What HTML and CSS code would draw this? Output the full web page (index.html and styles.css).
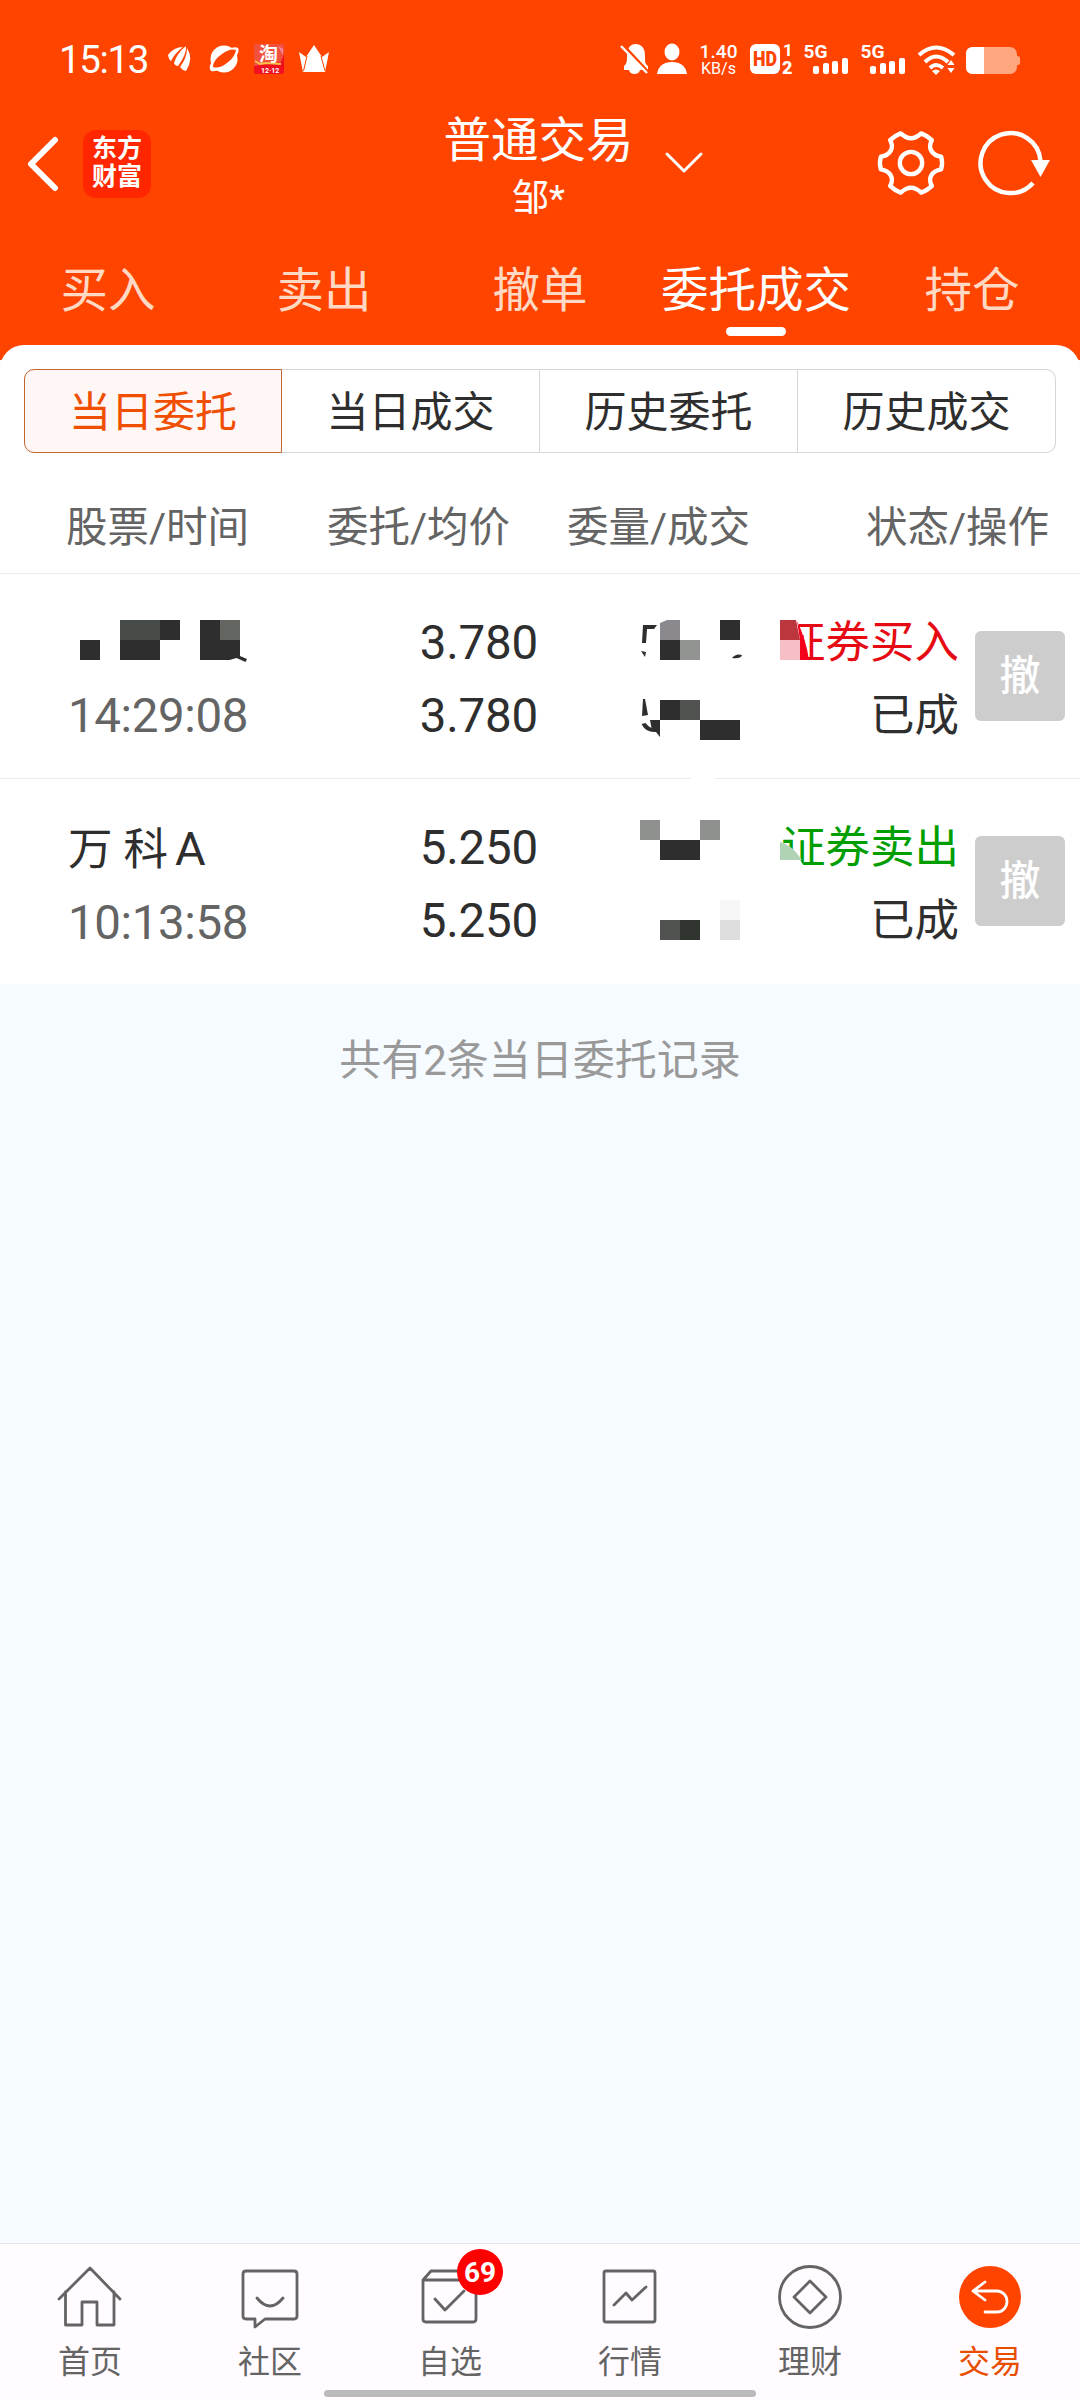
FILE: index.html
```
<!DOCTYPE html>
<html lang="zh-CN">
<head>
    <meta charset="UTF-8">
    <meta name="viewport" content="width=device-width, initial-scale=1.0">
    <title>普通交易</title>
    <link rel="stylesheet" href="styles.css">
</head>
<body>
    <header class="top">
        <!-- Status bar -->
        <div class="status-bar">
            <span class="clock">15:13</span>
            <svg class="status-left" width="166" height="44" viewBox="166 36 166 44" fill="#fff">
                <path d="M168 55Q174 47 183 47Q175 53 171 61Q169 60 168 55Z"/>
                <path d="M174 63Q177 53 186 46Q187 54 178 66Q175 66 174 63Z"/>
                <path d="M180 67Q187 58 187 48Q194 59 186 71Q182 70 180 67Z"/>
                <circle cx="224" cy="59" r="13.500"/>
                <path d="M211 71Q206 65 220 54Q233 45 238 48Q241 54 228 64Q216 73 211 71Z"/>
                <path d="M213 67Q213 60 222 54Q230 48 236 50Q235 57 227 63Q219 69 213 67Z" fill="#ff4400"/>
                <rect x="254" y="44" width="30" height="30" rx="2" fill="#f01020"/>
                <path d="M254 44h30v10l-3 8-27 4z" fill="#f0503c"/>
                <path d="M255 61l5 3 6-1 15 1" stroke="#ffc04a" stroke-width="2" fill="none"/>
                <path d="M278 46l5 3v6z" fill="#f887a8"/>
                <text x="259" y="61" font-size="19" font-weight="700">淘</text>
                <text x="261" y="73" font-size="7" font-weight="700">12·12</text>
                <path d="M303 72L299 52L306 57L314 45L322 57L329 52L325 72Z"/>
                <path d="M307 56L303.500 71M321 56L325 71" stroke="#ff4400" stroke-width="1" fill="none"/>
            </svg>
            <svg class="status-right" width="402" height="44" viewBox="620 36 402 44" fill="#fff">
                <path d="M624 66q3-2 3-8v-3q1-11 8-11 10 0 10 12v4q0 4 3 6v4h-24zM629 70h11q-1 4-5.500 4t-5.500-4z"/>
                <path d="M624 46L649 73" stroke="#ff4400" stroke-width="3"/>
                <path d="M621 46L647 73" stroke="#fff" stroke-width="2.400"/>
                <ellipse cx="672" cy="52" rx="7.500" ry="8.500"/>
                <path d="M657 74q2-12 15-12t15 12z"/>
                <text x="699.500" y="58" font-size="19" font-weight="500" textLength="38">1.40</text>
                <text x="701" y="74" font-size="16.500" textLength="35" lengthAdjust="spacingAndGlyphs">KB/s</text>
                <rect x="750" y="44" width="30" height="30" rx="6"/>
                <text x="753" y="66" font-size="20" font-weight="900" fill="#ff4400" textLength="24" lengthAdjust="spacingAndGlyphs">HD</text>
                <text x="783" y="56" font-size="17" font-weight="700">1</text>
                <text x="782" y="74" font-size="18" font-weight="900">2</text>
                <g id="signal">
                    <text x="803.500" y="58" font-size="19" font-weight="700" textLength="24" lengthAdjust="spacingAndGlyphs">5G</text>
                    <rect x="813" y="66" width="6" height="8" rx="2"/>
                    <rect x="823" y="63" width="6" height="11" rx="2"/>
                    <rect x="832" y="61" width="6" height="13" rx="2"/>
                    <rect x="842" y="58" width="6" height="16" rx="2"/>
                </g>
                <use href="#signal" x="57"/>
                <g fill="none" stroke="#fff" stroke-width="4">
                    <path d="M919 55q17-15 35 0"/>
                    <path d="M925 62q11-11 23 0"/>
                    <path d="M930 68q6-6 13 0"/>
                </g>
                <path d="M932 71q4-3 8 0l-4 4zM951 60l3.500 5h-7zM951 73l-3.500-5h7z"/>
                <rect x="966" y="47" width="51" height="27" rx="7" fill="#ffa880"/>
                <path d="M1017 56q3 0 3 2v5q0 2-3 2z" fill="#ffa880"/>
                <path d="M984 47h-11q-7 0-7 7v13q0 7 7 7h11z"/>
            </svg>
        </div>

        <!-- Title -->
        <div class="title-bar">
            <div class="title-left">
                <svg width="34" height="60" viewBox="0 0 34 60" fill="none" stroke="#fff" stroke-width="6" stroke-linecap="round" stroke-linejoin="round">
                    <path d="M30 6L6 30L30 54"/>
                </svg>
                <div class="logo">东方<br>财富</div>
            </div>
            <div class="title">
                <h1>普通交易</h1>
                <p>邹*</p>
                <svg class="title-arrow" width="40" height="24" viewBox="0 0 40 24" fill="none" stroke="#fff" stroke-width="3" stroke-linecap="round" stroke-linejoin="round">
                    <path d="M3 3L20 20L37 3"/>
                </svg>
            </div>
            <div class="title-right">
                <svg width="70" height="70" viewBox="-36 -36 72 72" fill="none" stroke="#fff" stroke-width="4.500" stroke-linejoin="round">
                    <path d="M31 -6.500Q33 0 31 6.500C21 8 17 16 21.500 23.500Q17 28 10.500 30.500Q0 20.500 -10.500 30.500Q-17 28 -21.500 23.500C-17 16 -21 8 -31 6.500Q-33 0 -31 -6.500C-21 -8 -17 -16 -21.500 -23.500Q-17 -28 -10.500 -30.500Q0 -20.500 10.500 -30.500Q17 -28 21.500 -23.500C17 -16 21 -8 31 -6.500Z"/>
                    <circle r="11.500"/>
                </svg>
                <svg width="74" height="70" viewBox="-33 -35 74 70">
                    <path d="M22 20A30 30 0 1 1 29.500 -2" fill="none" stroke="#fff" stroke-width="4.500"/>
                    <path d="M20 -3h19l-9.500 17z" fill="#fff"/>
                </svg>
            </div>
        </div>

        <nav class="tabs">
            <a>买入</a>
            <a>卖出</a>
            <a>撤单</a>
            <a class="active">委托成交</a>
            <a>持仓</a>
        </nav>
    </header>

    <main class="panel">
        <div class="segments">
            <button class="segment active">当日委托</button>
            <button class="segment">当日成交</button>
            <button class="segment">历史委托</button>
            <button class="segment">历史成交</button>
        </div>

        <div class="columns">
            <span>股票/时间</span>
            <span>委托/均价</span>
            <span>委量/成交</span>
            <span>状态/操作</span>
        </div>

        <div class="order">
            <div class="name"><p>&nbsp;</p><p class="time">14:29:08</p></div>
            <div class="price"><p>3.780</p><p>3.780</p></div>
            <div class="state"><p class="buy">证券买入</p><p>已成</p></div>
            <button class="cancel">撤</button>
            <!-- Hidden name and quantity -->
            <svg class="mosaic" width="1080" height="206" viewBox="0 574 1080 206">
                <g fill="#2e2e2e">
                    <path d="M80 640h20v20h-20zM160 620h20v20h-20zM120 640h40v20h-40zM200 620h20v20h20v16l7 3-1.500 3-9-4-7 2h-29.500z"/>
                    <path d="M643 625h14l-3 4h-7l-1 14h-4zM641 651l5 1-1 5zM660 640h20v20h-20zM720 620h20v20h-20zM732 658q4-5 10-3-1 4-10 3z"/>
                    <path d="M643 699h2l3 16-6 1z"/>
                    <path d="M650 720h10v17l-4-5q-10 1-14.500-8l4-1q3 4 6 5z"/>
                    <path d="M660 700h20v20h-20zM700 720h40v20h-40z"/>
                </g>
                <path d="M120 620h40v20h-40z" fill="#484c48"/>
                <path d="M220 620h20v20h-20z" fill="#646662"/>
                <path d="M660 623l7-3h13v20h-20z" fill="#8c898e"/>
                <path d="M680 640h20v20h-20z" fill="#929491"/>
                <path d="M680 700h20v20h-20z" fill="#50534f"/>
                <path d="M774 614h24l4 48h-28z" fill="#fff"/>
                <path d="M780 620h16l4 20h-20z" fill="#bb373d"/>
                <path d="M780 640h20v20h-20z" fill="#f7bec5"/>
                <path d="M797 621q9 18 12 39h-9v-20z" fill="#f4001a"/>
                <path d="M691 777h24v3h-24z" fill="#fff"/>
            </svg>
        </div>

        <div class="order">
            <div class="name"><p>万 科<span class="suffix">A</span></p><p class="time">10:13:58</p></div>
            <div class="price"><p>5.250</p><p>5.250</p></div>
            <div class="state"><p class="sell">证券卖出</p><p>已成</p></div>
            <button class="cancel">撤</button>
            <svg class="mosaic" width="1080" height="206" viewBox="0 779 1080 206">
                <path d="M640 820h20v20h-20zM700 820h20v20h-20z" fill="#8f918e"/>
                <path d="M660 840h40v20h-40z" fill="#2e2e2e"/>
                <path d="M660 920h20v20h-20z" fill="#50534f"/>
                <path d="M680 920h20v20h-20z" fill="#2f342f"/>
                <path d="M720 900h20v20h-20z" fill="#f7f7f7"/>
                <path d="M720 920h20v20h-20z" fill="#dedede"/>
                <path d="M780 860v6h24l-4-6z" fill="#fff"/>
                <path d="M780 842q11 2 22 18h-22z" fill="#afd3b4"/>
            </svg>
        </div>
    </main>

    <p class="summary">共有2条当日委托记录</p>

    <!-- Bottom navigation -->
    <nav class="bottom-nav">
        <a>
            <svg width="70" height="70" viewBox="-35 -35 70 70">
                <path d="M-31 2L0 -29L30 2M-24.500 -5V28H-8V5H7V28H24V-5"/>
            </svg>
            首页
        </a>
        <a>
            <svg width="70" height="70" viewBox="-35 -35 70 70">
                <path d="M-24 -26H24Q27 -26 27 -23V19Q27 22 24 22H-5L-15 30V22H-24Q-27 22 -27 19V-23Q-27 -26 -24 -26ZM-13 1Q0 17 13 1"/>
            </svg>
            社区
        </a>
        <a>
            <svg width="70" height="70" viewBox="-35 -35 70 70">
                <path d="M-27 -17L-19 -26H19L26 -17V22Q26 25 23 25H-24Q-27 25 -27 22ZM-27 -17H26M-15 2L-5 13L14 -6"/>
            </svg>
            <span class="badge">69</span>
            自选
        </a>
        <a>
            <svg width="70" height="70" viewBox="-35 -35 70 70">
                <rect x="-26" y="-26" width="51" height="51" rx="2"/>
                <path d="M-16 8L-4 -4L2 3L16 -10"/>
            </svg>
            行情
        </a>
        <a>
            <svg width="70" height="70" viewBox="-35 -35 70 70">
                <circle r="30.500"/>
                <path d="M0 -16L16 0L0 16L-16 0Z"/>
            </svg>
            理财
        </a>
        <a class="active">
            <svg width="70" height="70" viewBox="-35 -35 70 70">
                <circle r="31" fill="#ff4400" stroke="none"/>
                <path d="M-5 -15L-17 -6L-5 3M-17 -6H7A10 10.500 0 0 1 7 15H-5" stroke="#fff"/>
            </svg>
            交易
        </a>
        <div class="home-bar"></div>
    </nav>
</body>
</html>
```
FILE: styles.css
```
* {
    box-sizing: border-box;
}
body {
    margin: 0;
    width: 1080px;
    height: 2400px;
    display: flex;
    flex-direction: column;
    background-color: #f6fbff;
    color: #2e2e2e;
    font-family: Roboto, "Noto Sans CJK SC", sans-serif;
    overflow: hidden;
}
p, h1 {
    margin: 0;
    font-weight: 400;
}
button {
    font-family: inherit;
    color: inherit;
    padding: 0;
}
.top {
    height: 360px;
    background-color: #ff4400;
    color: #fff;
}
.status-bar {
    height: 98px;
    padding: 36px 58px 0 59px;
    display: flex;
}
.clock {
    width: 107px;
    font-size: 38.5px;
    line-height: 47px;
    letter-spacing: -1.4px;
}
.status-right {
    margin-left: auto;
}
.title-bar {
    height: 146px;
    padding: 0 28px 0 25px;
    display: grid;
    grid-template-columns: 1fr 300px 1fr;
}
.title-left {
    display: flex;
    align-items: center;
    gap: 24px;
    height: 132px;
}
.logo {
    width: 68px;
    height: 68px;
    padding-top: 5px;
    border-radius: 13px;
    background-color: #ff2600;
    font-size: 25px;
    font-weight: 700;
    line-height: 28px;
    text-align: center;
}
.title {
    position: relative;
    text-align: center;
}
.title h1 {
    padding-top: 13px;
    font-size: 47.5px;
    line-height: 60px;
}
.title p {
    font-size: 37px;
    line-height: 56px;
}
.title-arrow {
    position: absolute;
    left: 275px;
    top: 53px;
}
.title-right {
    display: flex;
    justify-content: flex-end;
    align-items: center;
    gap: 32px;
    height: 130px;
}
.tabs {
    height: 101px;
    display: grid;
    grid-template-columns: repeat(5, 1fr);
}
.tabs a {
    display: flex;
    flex-direction: column;
    align-items: center;
    color: #ffd9c4;
    font-size: 47.5px;
    line-height: 94px;
}
.tabs .active {
    color: #fff;
}
.tabs .active::after {
    content: "";
    width: 60px;
    height: 9px;
    margin-top: -11px;
    border-radius: 5px;
    background-color: #fff;
}
.panel {
    margin-top: -15px;
    padding-top: 24px;
    border-radius: 24px 24px 0 0;
    background-color: #fff;
}
.segments {
    display: grid;
    grid-template-columns: repeat(4, 1fr);
    margin: 0 24px;
}
.segment {
    height: 84px;
    padding-top: 2px;
    border: 1px solid #d5d5da;
    border-left-width: 0;
    background-color: #fff;
    font-size: 42px;
    line-height: 82px;
}
.segment:last-child {
    border-radius: 0 10px 10px 0;
}
.segment.active {
    border: 1px solid #c0662e;
    border-radius: 10px 0 0 10px;
    background-color: #fff6f6;
    color: #f04e00;
}
.columns {
    display: grid;
    grid-template-columns: 261px 240px 1fr 182px;
    height: 121px;
    padding: 24px 32px 0 66px;
    border-bottom: 1px solid #ececec;
    color: #646464;
    font-size: 41.5px;
    line-height: 101px;
    white-space: nowrap;
}
.order {
    position: relative;
    display: grid;
    grid-template-columns: 251px 219px 1fr 90px;
    height: 205px;
    padding: 33px 15px 0 68px;
    border-bottom: 1px solid #ececec;
    font-size: 44.5px;
    line-height: 73px;
}
.order:last-child {
    border-bottom: 0;
}
.suffix {
    margin-left: 7px;
    font-size: 47px;
}
.time {
    color: #646464;
    font-size: 47.5px;
    letter-spacing: -0.4px;
}
.price {
    font-size: 47.5px;
    letter-spacing: -0.2px;
    text-align: right;
}
.state {
    padding-right: 16px;
    text-align: right;
}
.cancel {
    width: 90px;
    height: 90px;
    margin-top: 24px;
    border: 0;
    border-radius: 6px;
    background-color: #cdcdcd;
    color: #fff;
    font-size: 41px;
    font-weight: 500;
    line-height: 88px;
}
.buy {
    color: #e60a12;
}
.sell {
    color: #009e00;
}
.mosaic {
    position: absolute;
    left: 0;
    top: 0;
}
.summary {
    margin-top: 44px;
    color: #999;
    font-size: 42px;
    line-height: 66px;
    text-align: center;
}
.bottom-nav {
    position: relative;
    display: grid;
    grid-template-columns: repeat(6, 1fr);
    height: 157px;
    margin-top: auto;
    padding-top: 18px;
    border-top: 1px solid #e4e4e6;
    background-color: #fffbff;
}
.bottom-nav a {
    position: relative;
    display: flex;
    flex-direction: column;
    align-items: center;
    color: #646464;
    font-size: 32px;
    line-height: 60px;
}
.bottom-nav svg {
    fill: none;
    stroke: #646464;
    stroke-width: 2.8px;
    stroke-linecap: round;
    stroke-linejoin: round;
}
.bottom-nav .active {
    color: #e84e00;
}
.badge {
    position: absolute;
    left: 97px;
    top: -13px;
    width: 46px;
    height: 46px;
    border-radius: 50%;
    background-color: #f00;
    color: #fff;
    font-size: 28px;
    font-weight: 700;
    line-height: 47px;
    text-align: center;
}
.home-bar {
    position: absolute;
    left: 324px;
    bottom: 3px;
    width: 432px;
    height: 7px;
    border-radius: 4px;
    background-color: #bbb;
}
```
